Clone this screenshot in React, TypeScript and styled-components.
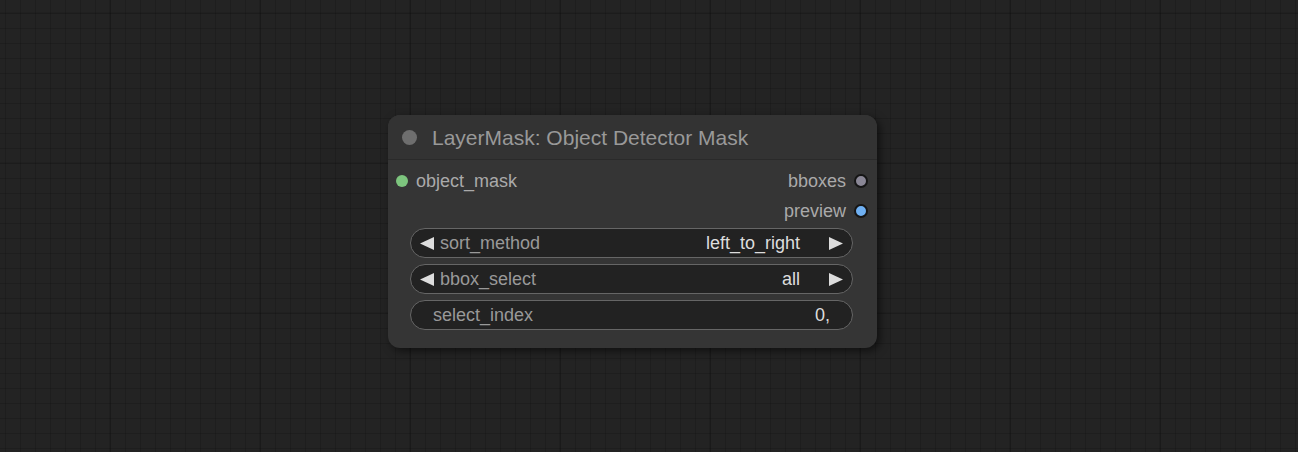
import React from "react";
import styled, { createGlobalStyle } from "styled-components";

const Global = createGlobalStyle`
  html, body { margin: 0; padding: 0; }
  body {
    width: 1298px;
    height: 452px;
    overflow: hidden;
    background-color: #222222;
    font-family: "Liberation Sans", Arial, sans-serif;
  }
`;

const Canvas = styled.div`
  position: relative;
  width: 1298px;
  height: 452px;
  background-color: #232323;
  background-image:
    linear-gradient(to right, rgba(0,0,0,0.12) 0 2px, transparent 2px),
    linear-gradient(to bottom, rgba(0,0,0,0.08) 0 2px, transparent 2px),
    linear-gradient(to right, rgba(0,0,0,0.15) 0 1px, transparent 1px),
    linear-gradient(to bottom, rgba(0,0,0,0.15) 0 1px, transparent 1px);
  background-size: 150px 150px, 150px 150px, 15px 15px, 15px 15px;
  background-position: 109px 0, 0 12px, 110px 0, 0 13px;
`;

const Node = styled.div`
  position: absolute;
  left: 388px;
  top: 115px;
  width: 489px;
  height: 233px;
  background: #353535;
  border-radius: 12px;
  box-shadow: 3px 3px 8px rgba(0, 0, 0, 0.55);
  display: flex;
  flex-direction: column;
  overflow: hidden;
`;

const Title = styled.div`
  height: 45px;
  flex: 0 0 45px;
  background: #333333;
  border-bottom: 1px solid #2a2a2a;
  box-sizing: border-box;
  display: flex;
  align-items: center;
  padding-left: 14px;
  gap: 15px;
`;

const TitleDot = styled.span`
  width: 15px;
  height: 15px;
  border-radius: 50%;
  background: #6e6e6e;
  flex: none;
`;

const TitleText = styled.span`
  font-size: 21px;
  color: #999999;
  line-height: 1;
  white-space: nowrap;
`;

const Slots = styled.div`
  display: flex;
  flex-direction: column;
  padding-top: 6px;
`;

const SlotRow = styled.div<{ $right?: boolean }>`
  height: 30px;
  display: flex;
  align-items: center;
  justify-content: ${(p) => (p.$right ? "flex-end" : "flex-start")};
  padding: 0 9px 0 8px;
  gap: 8px;
`;

const SlotLabel = styled.span`
  font-size: 18px;
  color: #aaaaaa;
  line-height: 1;
  white-space: nowrap;
`;

const Dot = styled.span<{ $color: string; $outline?: boolean }>`
  width: ${(p) => (p.$outline ? "14px" : "12px")};
  height: ${(p) => (p.$outline ? "14px" : "12px")};
  border-radius: 50%;
  background: ${(p) => p.$color};
  box-sizing: border-box;
  border: ${(p) => (p.$outline ? "2px solid #151515" : "none")};
  flex: none;
`;

const Spacer = styled.div`
  flex: 1;
`;

const Widgets = styled.div`
  display: flex;
  flex-direction: column;
  gap: 6px;
  padding: 2px 24px 0 22px;
`;

const Widget = styled.div<{ $combo?: boolean }>`
  height: 30px;
  box-sizing: border-box;
  border: 1px solid #666666;
  background: #222222;
  border-radius: 15px;
  display: flex;
  align-items: center;
  padding: ${(p) => (p.$combo ? "0 9px 0 9px" : "0 22px 0 22px")};
  font-size: 18px;
  line-height: 1;
`;

const WLabel = styled.span`
  color: #999999;
  white-space: nowrap;
`;

const WValue = styled.span`
  color: #dddddd;
  white-space: nowrap;
  margin-left: auto;
`;

const ArrowBox = styled.span<{ $right?: boolean }>`
  display: flex;
  align-items: center;
  margin: ${(p) => (p.$right ? "0 0 0 28px" : "0 5px 0 0")};
`;

const Arrow = ({ right }: { right?: boolean }) => (
  <ArrowBox $right={right}>
    <svg width="15" height="15" viewBox="0 0 15 15">
      {right ? (
        <polygon points="1,1 15,7.5 1,14" fill="#dddddd" />
      ) : (
        <polygon points="14,1 0,7.5 14,14" fill="#dddddd" />
      )}
    </svg>
  </ArrowBox>
);

export default function App() {
  return (
    <>
      <Global />
      <Canvas>
        <Node>
          <Title>
            <TitleDot />
            <TitleText>LayerMask: Object Detector Mask</TitleText>
          </Title>
          <Slots>
            <SlotRow>
              <Dot $color="#7dc57e" />
              <SlotLabel>object_mask</SlotLabel>
              <Spacer />
              <SlotLabel>bboxes</SlotLabel>
              <Dot $color="#8a8796" $outline />
            </SlotRow>
            <SlotRow $right>
              <SlotLabel>preview</SlotLabel>
              <Dot $color="#6fb0f2" $outline />
            </SlotRow>
          </Slots>
          <Widgets>
            <Widget $combo>
              <Arrow />
              <WLabel>sort_method</WLabel>
              <WValue>left_to_right</WValue>
              <Arrow right />
            </Widget>
            <Widget $combo>
              <Arrow />
              <WLabel>bbox_select</WLabel>
              <WValue>all</WValue>
              <Arrow right />
            </Widget>
            <Widget>
              <WLabel>select_index</WLabel>
              <WValue>0,</WValue>
            </Widget>
          </Widgets>
        </Node>
      </Canvas>
    </>
  );
}
